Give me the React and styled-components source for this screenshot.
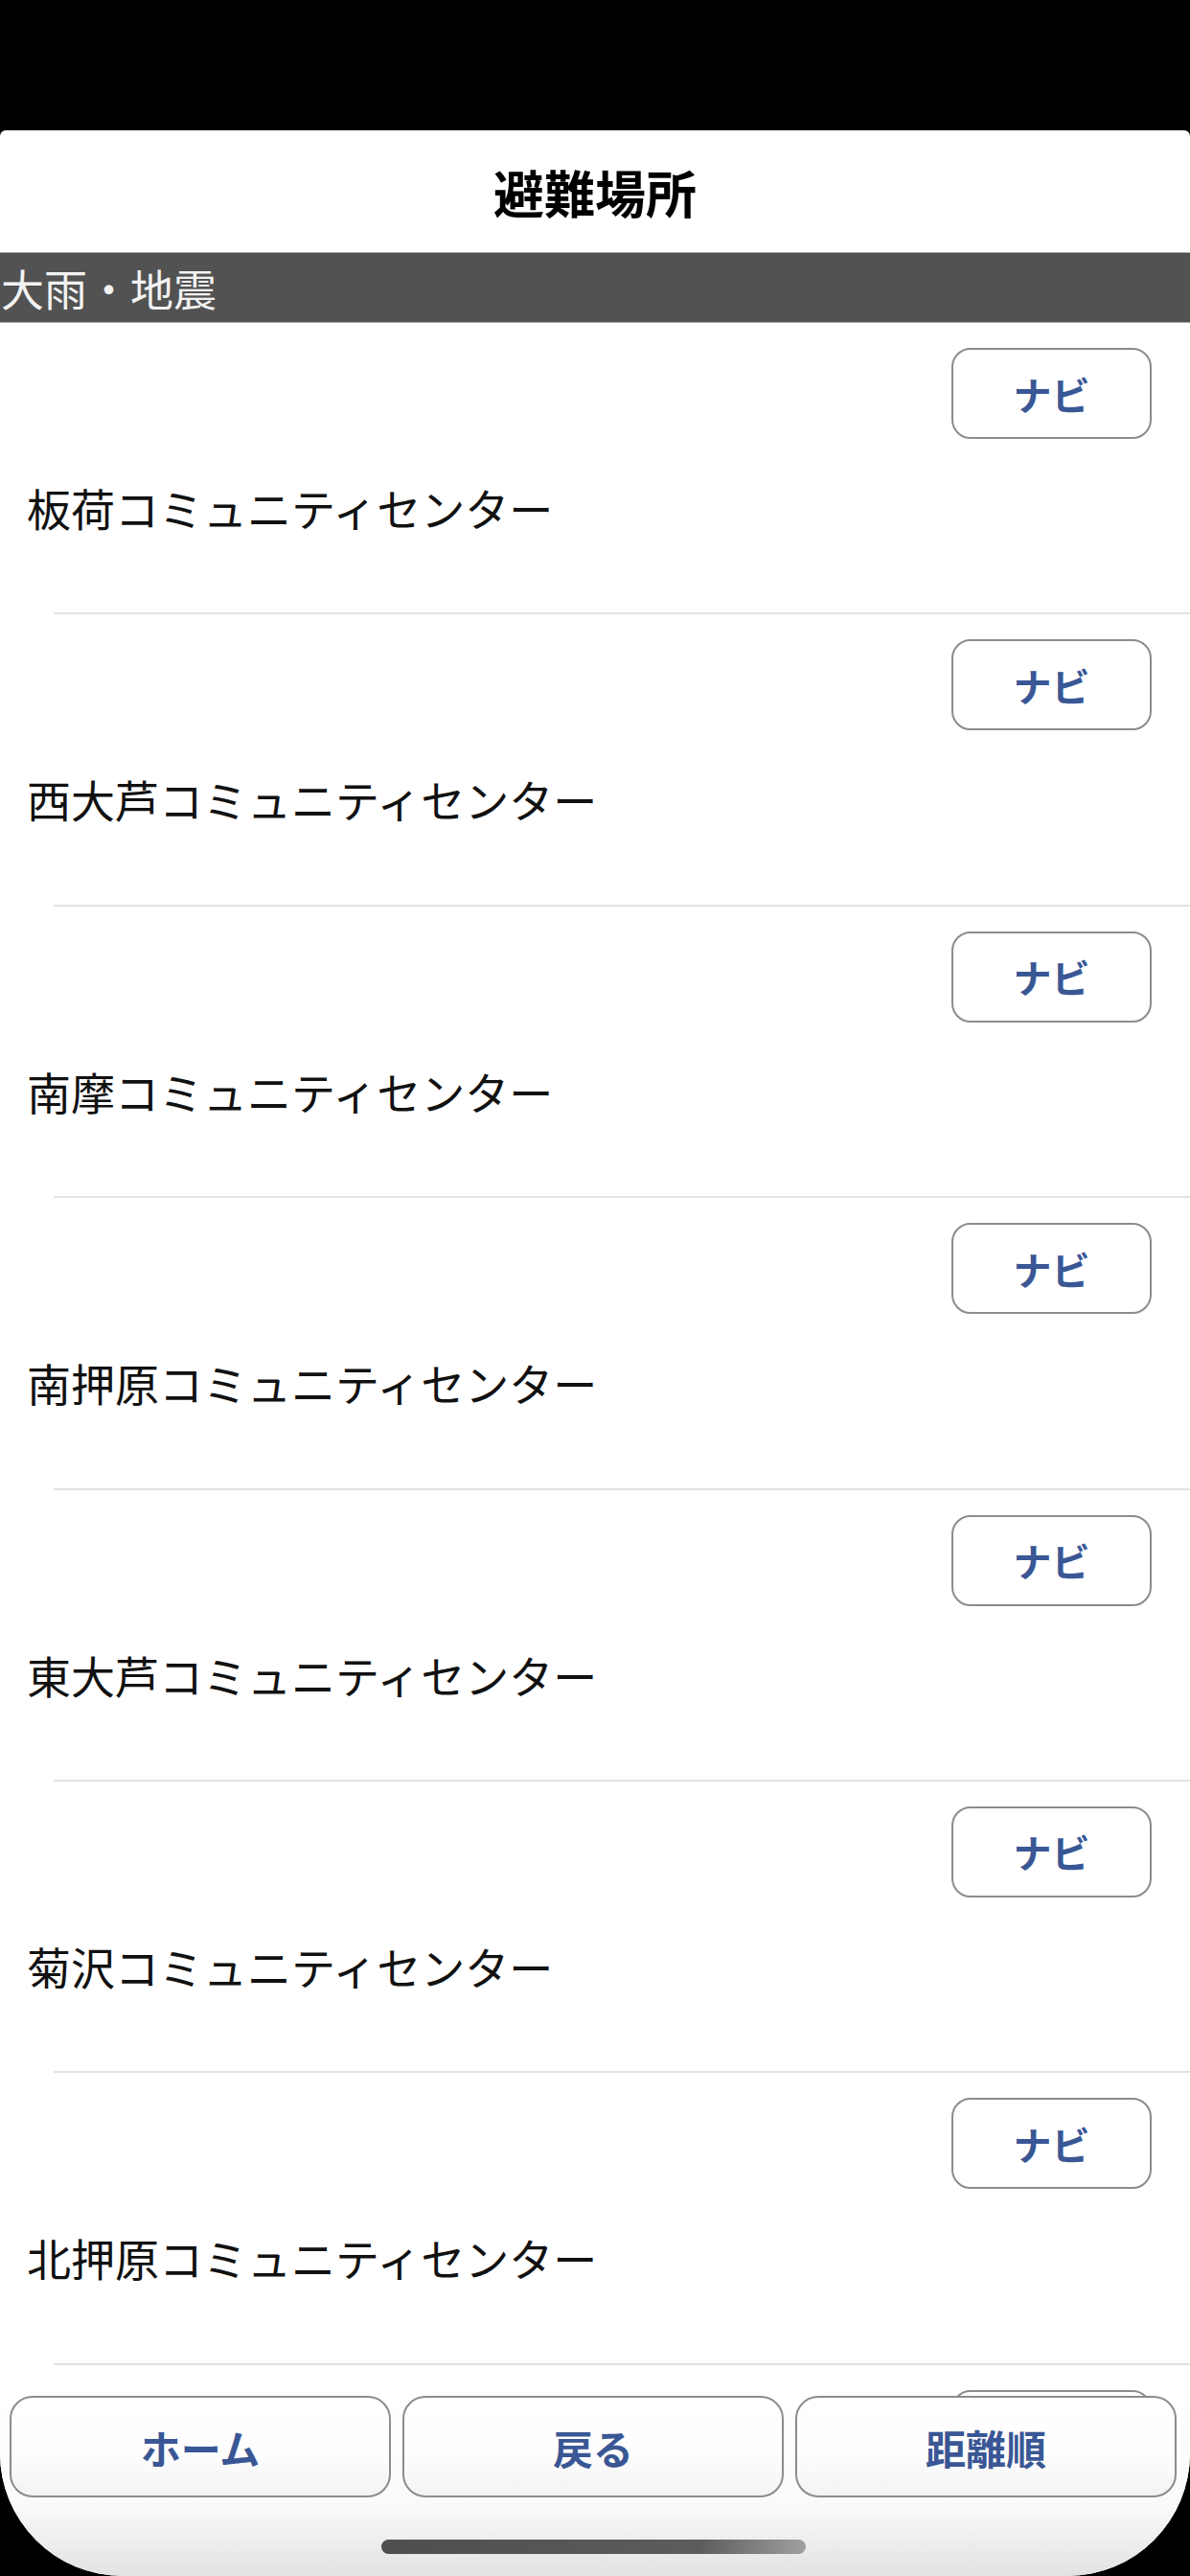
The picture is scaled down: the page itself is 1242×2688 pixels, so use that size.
import React from 'react';
import styled, { createGlobalStyle } from 'styled-components';

//Global
const GlobalStyle = createGlobalStyle`
	html, body {
		margin: 0;
		padding: 0;
		background: #000;
	}
	body {
		font-family: "Noto Sans CJK JP", "Noto Sans", sans-serif;
	}
`;

//Styling
const SCREEN = styled.div`
	width: 1242px;
	height: 2688px;
	background: #000;
	padding-top: 136px;
	box-sizing: border-box;
`;
const SHEET = styled.div`
	position: relative;
	height: 2552px;
	background: #fff;
	border-radius: 6px 6px 128px 128px;
	overflow: hidden;
`;
const HEADER = styled.h1`
	margin: 0;
	height: 127px;
	display: flex;
	align-items: center;
	justify-content: center;
	font-size: 53px;
	font-weight: 700;
	color: #000;
`;
const DIVIDER = styled.div`
	height: 72px;
	display: flex;
	align-items: center;
	background: #525252;
	border-top: 1px solid #aaa;
	border-bottom: 1px solid #aaa;
	color: #f2f2f2;
	font-size: 45px;
	padding-left: 1px;
`;
const ROW = styled.div`
	height: 304.4px;
	box-sizing: border-box;
	display: flex;
	flex-direction: column;
	padding: 26px 40px 0 28px;
`;
const LINE = styled.div`
	margin-top: auto;
	margin-left: 28px;
	margin-right: -40px;
	height: 2px;
	background: #e3e3e3;
`;
const NAVI = styled.button`
	align-self: flex-end;
	width: 209px;
	height: 95px;
	border: 2.5px solid #8c8c8c;
	border-radius: 20px;
	background: #fff;
	color: #3a5795;
	font-family: inherit;
	font-size: 40px;
	font-weight: 700;
	padding: 0;
`;
const NAME = styled.div`
	margin-top: 41px;
	line-height: 60px;
	font-size: 46px;
	color: #111;
`;
const TOOLBAR = styled.div`
	position: absolute;
	left: 0;
	right: 0;
	bottom: 0;
	height: 188px;
	box-sizing: border-box;
	padding: 0 14px 0 10px;
	background: linear-gradient(#fff 0%, #fafafa 60%, #e2e2e2 100%);
	display: flex;
	flex-direction: column;
	align-items: center;
`;
const TOOLS = styled.div`
	align-self: stretch;
	display: grid;
	grid-template-columns: repeat(3, 1fr);
	gap: 12px;
`;
const TOOL = styled.button`
	height: 106px;
	border: 2.5px solid #8c8c8c;
	border-radius: 24px;
	background: linear-gradient(#fff 0%, #fdfdfd 60%, #f3f3f3 100%);
	color: #3a5795;
	font-family: inherit;
	font-size: 42px;
	font-weight: 700;
	padding: 0;
`;
const HOMEBAR = styled.div`
	margin-top: 44px;
	width: 443px;
	height: 15px;
	border-radius: 8px;
	background: linear-gradient(to right, #4e4e4e 0%, #5c5c5c 75%, #a0a0a0 100%);
`;

const places = [
	'板荷コミュニティセンター',
	'西大芦コミュニティセンター',
	'南摩コミュニティセンター',
	'南押原コミュニティセンター',
	'東大芦コミュニティセンター',
	'菊沢コミュニティセンター',
	'北押原コミュニティセンター',
];

const App = () => {
	return (
		<SCREEN>
			<GlobalStyle />
			<SHEET>
				<HEADER>避難場所</HEADER>
				<DIVIDER>大雨・地震</DIVIDER>
				{places.map((name) => (
					<ROW key={name}>
						<NAVI>ナビ</NAVI>
						<NAME>{name}</NAME>
						<LINE />
					</ROW>
				))}
				{/* next row, scrolled under the toolbar */}
				<ROW>
					<NAVI aria-label="ナビ" />
				</ROW>
				<TOOLBAR>
					<TOOLS>
						<TOOL>ホーム</TOOL>
						<TOOL>戻る</TOOL>
						<TOOL>距離順</TOOL>
					</TOOLS>
					<HOMEBAR />
				</TOOLBAR>
			</SHEET>
		</SCREEN>
	);
};

export default App;
